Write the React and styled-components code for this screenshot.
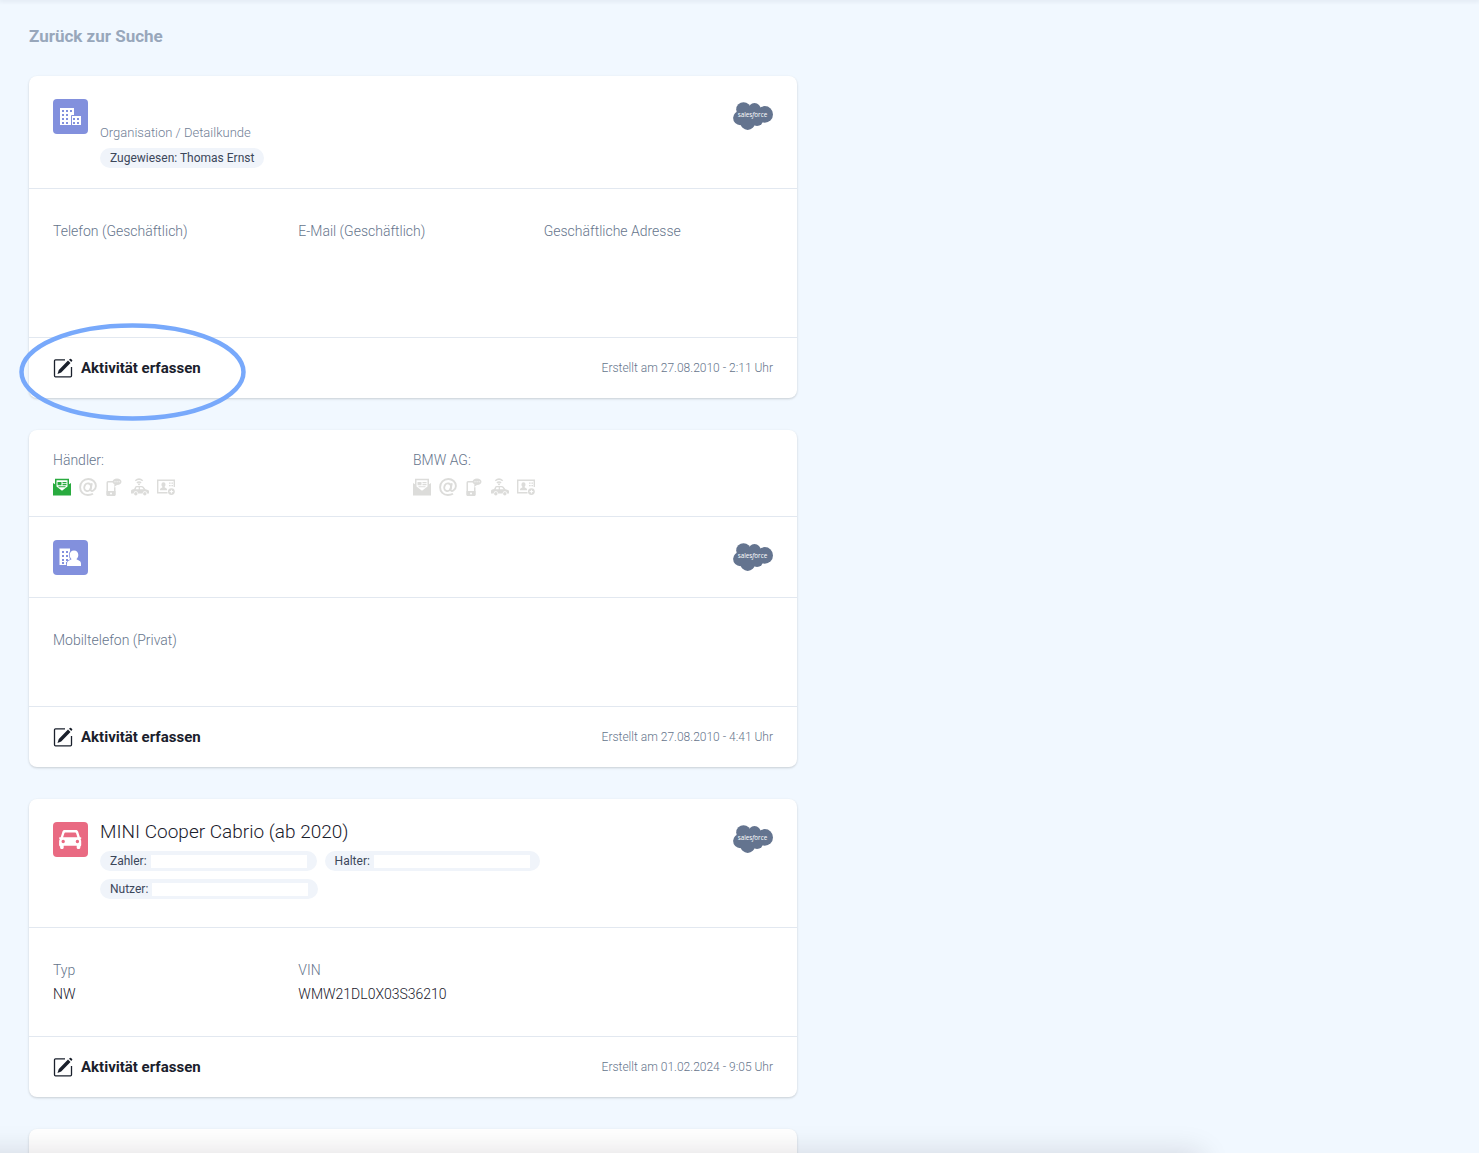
import React from 'react';
import styled, { createGlobalStyle } from 'styled-components';

const GlobalStyle = createGlobalStyle`
  * {
    box-sizing: border-box;
  }

  body {
    margin: 0;
    background-color: #f1f8ff;
    color: #1a202c;
    font-family: Roboto, "Noto Sans", sans-serif;
    font-size: 14px;
    font-weight: 300;
  }
`;

const Page = styled.main`
  height: 100vh;
  padding: 24px 29px 0;
  overflow: hidden;
`;

const TopEdge = styled.div`
  position: fixed;
  top: 0;
  left: 0;
  right: 0;
  height: 0;
  box-shadow: 0 0 4px 1px rgba(45, 55, 90, 0.14);
`;

const BottomEdge = styled.div`
  position: fixed;
  top: 100%;
  left: -40px;
  width: 84%;
  height: 60px;
  box-shadow: 0 0 30px 0 rgba(30, 10, 30, 0.14);
`;

const BackLink = styled.a`
  display: inline-block;
  line-height: 24px;
  font-size: 17px;
  font-weight: 700;
  color: #98a7bb;
  text-decoration: none;
`;

const CardList = styled.div`
  display: flex;
  flex-direction: column;
  gap: 32px;
  max-width: 768px;
  margin-top: 28px;
`;

const Card = styled.section`
  min-height: 80px;
  background-color: #fff;
  border-radius: 8px;
  box-shadow: 0 1px 3px rgba(0, 0, 0, 0.1), 0 1px 2px rgba(0, 0, 0, 0.08);
`;

const Header = styled.header`
  display: flex;
  gap: 12px;
  min-height: 80px;
  padding: 19px 24px 20px;
`;

const TypeIcon = styled.div`
  flex: none;
  width: 35px;
  height: 35px;
  margin-top: 4px;
  border-radius: 4px;
  background-color: ${props => props.$color};

  svg {
    display: block;
  }
`;

const HeaderText = styled.div`
  flex: 1;
  max-width: 480px;
`;

const Title = styled.h2`
  min-height: 28px;
  margin: 0;
  font-size: 19px;
  font-weight: 300;
  line-height: 28px;
`;

const Subtitle = styled.div`
  font-size: 13px;
  line-height: 20px;
  color: #718096;
`;

const Badges = styled.div`
  display: flex;
  flex-wrap: wrap;
  gap: 8px;
  margin-top: 5px;
  padding-bottom: ${props => props.$spaced ? '8px' : '0'};
`;

const Badge = styled.span`
  display: flex;
  align-items: center;
  height: 20px;
  padding: 0 10px;
  border-radius: 10px;
  background-color: #f0f4fa;
  font-size: 12px;
  font-weight: 400;
  color: #3c475a;
`;

const Blank = styled.span`
  width: 156px;
  height: 13px;
  margin-left: 4px;
  background-color: #fff;
`;

const LogoSlot = styled.div`
  flex: none;
  margin: 7px 0 0 auto;

  svg {
    display: block;
  }
`;

const Consents = styled.div`
  display: grid;
  grid-template-columns: 1fr 1fr;
  padding: 18px 24px 20px;
  border-bottom: 1px solid #e2e8f0;
`;

const ConsentIcons = styled.div`
  display: flex;
  gap: 8px;
  margin-top: 6px;
  color: #dcdcda;

  svg {
    display: block;
  }
`;

const Details = styled.dl`
  display: grid;
  grid-template-columns: repeat(3, 1fr);
  column-gap: 16px;
  margin: 0;
  padding: 30px 24px;
  border-top: 1px solid #e2e8f0;
  border-bottom: 1px solid #e2e8f0;
`;

const Label = styled.dt`
  line-height: 24px;
  font-size: 14px;
  color: #66758c;
`;

const Value = styled.dd`
  min-height: ${props => props.$tall ? '64px' : '24px'};
  margin: 0;
  font-size: 14px;
  line-height: 24px;
`;

const Footer = styled.footer`
  position: relative;
  display: flex;
  align-items: center;
  justify-content: space-between;
  height: 60px;
  padding: 0 24px;
`;

const ActionButton = styled.button`
  display: flex;
  align-items: center;
  gap: 8px;
  padding: 0;
  border: 0;
  background: none;
  color: #1a202c;
  font: inherit;
  font-size: 15px;
  font-weight: 700;
  cursor: pointer;
`;

const Created = styled.span`
  font-size: 12px;
  color: #66758c;
`;

const Marker = styled.svg`
  position: absolute;
  top: -15px;
  left: -10px;
  pointer-events: none;
`;

function SalesforceLogo(){
  return (
    <svg width="40" height="28" viewBox="0 0 40 28" role="img" aria-label="salesforce">
      <g fill="#64748f">
        <circle cx="10.500" cy="7.500" r="7.300" />
        <circle cx="21.500" cy="7.500" r="6.400" />
        <circle cx="31.700" cy="12.400" r="8.300" />
        <circle cx="7.300" cy="16" r="7.200" />
        <circle cx="14.700" cy="20.700" r="7.200" />
        <circle cx="24" cy="17.800" r="6.200" />
        <path d="M8 8h22v10H8z" />
      </g>
      <text x="4.700" y="15.200" fill="#fff" fontFamily="Open Sans, sans-serif" fontSize="6.300" fontWeight="500">
        sales<tspan fontStyle="italic">f</tspan>orce
      </text>
    </svg>
  );
}

function CompanyIcon(){
  return (
    <svg width="35" height="35" viewBox="0 0 35 35">
      <path d="M7 9h14v8h7v9h-21z" fill="#fff" />
      <path d="M18.500 26v-9.500h2.500" fill="none" stroke="#8290dd" />
      <g fill="#8290dd">
        {[11, 15, 19, 23].map(y => [9, 13, 17].map(x => (
          x === 17 && y > 11 ? null : <rect key={`${x}-${y}`} x={x} y={y} width="2" height="2" />
        )))}
        {[19, 23].map(y => [20, 24].map(x => <rect key={`${x}-${y}`} x={x} y={y} width="2" height="2" />))}
      </g>
    </svg>
  );
}

function ContactIcon(){
  return (
    <svg width="35" height="35" viewBox="0 0 35 35">
      <path d="M6.500 8.500h10.500v16.500h-10.500z" fill="#fff" />
      <g fill="#8290dd">
        {[11, 15, 19, 22].map(y => [9, 13].map(x => <rect key={`${x}-${y}`} x={x} y={y} width="2" height="2" />))}
      </g>
      <path
        d="M21 10.500c2.700 0 4.300 2 4.300 4.400 0 1.700-.7 3.200-1.800 4.200.2 1.200 4.500 1.200 4.500 4.600v2.300H14v-2.300c0-3.400 4.300-3.400 4.500-4.600-1.100-1-1.800-2.500-1.800-4.200 0-2.400 1.600-4.400 4.300-4.400z"
        fill="#fff"
        stroke="#8290dd"
        strokeWidth="1.600"
        paintOrder="stroke"
      />
    </svg>
  );
}

function CarIcon(){
  return (
    <svg width="35" height="35" viewBox="0 0 35 35">
      <path
        fill="#fff"
        fillRule="evenodd"
        d="M11.700 8h11.100c1.200 0 2 .6 2.400 1.700l1.700 5.500h.7c1 0 1 1.700 0 1.900 .4.800.6 1.500.6 2.400V23c0 .8-.3 1.300-.9 1.600v1.200c0 1.600-3.600 1.600-3.600 0v-2H10.700v2c0 1.600-3.600 1.600-3.600 0v-1.200c-.6-.3-1-.8-1-1.600v-3.500c0-.9.200-1.600.7-2.400-1-.2-1-1.900 0-1.900h.9l1.700-5.500C9.700 8.600 10.500 8 11.700 8zm.6 2.500c-.4 0-.7.200-.8.600l-1.400 4.100h14.300l-1.400-4.100c-.1-.4-.4-.6-.8-.6zM10.200 17.800a1.700 1.700 0 1 0 0 3.400 1.700 1.700 0 0 0 0-3.400zm14.200 0a1.700 1.700 0 1 0 0 3.400 1.700 1.700 0 0 0 0-3.400z"
      />
    </svg>
  );
}

function EditIcon(){
  return (
    <svg width="20" height="20" viewBox="0 0 20 20" aria-hidden="true">
      <path d="M12 1.800H2.500q-1 0-1 1v15q0 1 1 1h15q1 0 1-1V9" fill="none" stroke="#1a202c" strokeWidth="1.300" />
      <path d="M15 2.600l2.500 2.500-9.300 9.400-3.700 1.400 1.300-3.900zM16 1.700l.9-.8q.6-.5 1.200 0l1 1q.6.600 0 1.200l-.8.900z" fill="#1a202c" />
    </svg>
  );
}

function LetterIcon({color = 'currentColor'}){
  return (
    <svg width="18" height="18" viewBox="0 0 18 18" fill={color}>
      <path d="M2 .7h14v5.600l2-1.300v12.500H0V5l2 1.300zM3.500 2.200v6.300L9 12.700l5.500-4.200V2.200z" fillRule="evenodd" />
      <path d="M4.500 4h4v3.300h-4zM9.500 4h4v1.200h-4zM9.500 6.100h4v1.200h-4zM5.500 8.200h7v1h-7z" />
    </svg>
  );
}

function AtIcon(){
  return (
    <svg width="18" height="18" viewBox="0 0 18 18" fill="none" stroke="currentColor" strokeWidth="1.900">
      <ellipse cx="8.600" cy="9.200" rx="3.300" ry="3.900" transform="rotate(18 8.600 9.200)" />
      <path d="M12.800 5.200l-1.200 6c-.4 2 1.500 2.200 3 1 1.500-1 2.300-2.500 2.300-4.200C16.900 3.800 13.500 1 9.300 1 4.600 1 1.100 4.500 1.100 9.200s3.300 7.800 7.800 7.800c2 0 3.600-.4 5.100-1.300" />
    </svg>
  );
}

function PhoneIcon(){
  return (
    <svg width="18" height="18" viewBox="0 0 18 18" fill="currentColor">
      <path d="M3 3h5v1.500H3v9h6V9.300h1.500v7.200q0 1.500-1.500 1.500H3q-1.500 0-1.500-1.500v-12Q1.500 3 3 3z" />
      <path d="M1.500 13h9v3.500q0 1.500-1.500 1.500H3q-1.500 0-1.500-1.500z" />
      <circle cx="6" cy="15.600" r="1" fill="#fff" />
      <path d="M12 .5c2.700 0 4.500 1.300 4.500 3.300S14.700 7 12 7L9 9l.5-2.600C8.300 5.800 7.600 5 7.600 3.800 7.600 1.800 9.300.5 12 .5z" />
      <path d="M9.500 3.300h1v1h-1zM11.600 3.300h1v1h-1zM13.700 3.300h1v1h-1z" fill="#fff" />
    </svg>
  );
}

function ConnectedCarIcon(){
  return (
    <svg width="18" height="18" viewBox="0 0 18 18" fill="currentColor">
      <path d="M4.300 2.800Q8-.6 11.700 2.800M5.900 4.900q2.100-1.700 4.200 0" fill="none" stroke="currentColor" strokeWidth="1.500" />
      <circle cx="8" cy="6.300" r="1" />
      <path fillRule="evenodd" d="M5.500 8h5.300q1 0 1.700.8l2 2.400 2.500.7q1 .4 1 1.400v2.200h-2a2.200 2.200 0 0 0-4.400 0H7a2.200 2.200 0 0 0-4.400 0H0V13q0-1.200 1.200-1.500l1.900-.4 1-2.200Q4.500 8 5.500 8zm0 1.200l-.8 2h3v-2zm3.400 0v2h3.800l-1.500-1.700q-.3-.3-.8-.3z" />
      <circle cx="4.800" cy="15.800" r="1.700" />
      <circle cx="13.800" cy="15.800" r="1.700" />
    </svg>
  );
}

function IdCardIcon(){
  return (
    <svg width="18" height="18" viewBox="0 0 18 18" fill="currentColor">
      <path d="M17.300 9V2.200H.7v12.600h9.800" fill="none" stroke="currentColor" strokeWidth="1.400" />
      <path d="M6.500 4.300c2.500 0 2.500 3.500 1 4.600 0 .9 2.500.8 2.500 2.600v.8H3v-.8c0-1.800 2.500-1.700 2.500-2.600-1.500-1.100-1.500-4.600 1-4.600zM12 4.500h1.600v1.300H12zM14.400 4.500H16v1.300h-1.600zM12 7h1.600v1.300H12zM14.400 7H16v1.300h-1.600z" />
      <circle cx="14.400" cy="13.600" r="3.400" />
      <path d="M14.400 11.800v3.600M12.600 13.600h3.600" stroke="#fff" strokeWidth="1" />
    </svg>
  );
}

function ConsentGroup({label, letterColor}){
  return (
    <div>
      <Label as="div">{label}</Label>
      <ConsentIcons>
        <LetterIcon color={letterColor} />
        <AtIcon />
        <PhoneIcon />
        <ConnectedCarIcon />
        <IdCardIcon />
      </ConsentIcons>
    </div>
  );
}

function CardHeader({icon, color, children}){
  return (
    <Header>
      <TypeIcon $color={color}>{icon}</TypeIcon>
      <HeaderText>{children}</HeaderText>
      <LogoSlot><SalesforceLogo /></LogoSlot>
    </Header>
  );
}

function CardDetails({fields, tall}){
  return (
    <Details>
      {fields.map(field => (
        <div key={field.label}>
          <Label>{field.label}</Label>
          <Value $tall={tall}>{field.value}</Value>
        </div>
      ))}
    </Details>
  );
}

function CardFooter({created, marked}){
  return (
    <Footer>
      <ActionButton type="button"><EditIcon />Aktivität erfassen</ActionButton>
      <Created>Erstellt am {created} Uhr</Created>
      {marked ? (
        <Marker width="228" height="98" viewBox="0 0 228 98">
          <ellipse cx="113.500" cy="49" rx="111" ry="46.500" fill="none" stroke="#78a9fb" strokeWidth="4.500" />
        </Marker>
      ) : null}
    </Footer>
  );
}

function App(){
  return (
    <>
      <GlobalStyle />
      <TopEdge />
      <Page>
        <BackLink href="#suche">Zurück zur Suche</BackLink>
        <CardList>
          <Card>
            <CardHeader icon={<CompanyIcon />} color="#8290dd">
              <Title as="div" />
              <Subtitle>Organisation / Detailkunde</Subtitle>
              <Badges><Badge>Zugewiesen: Thomas Ernst</Badge></Badges>
            </CardHeader>
            <CardDetails
              tall
              fields={[{label: 'Telefon (Geschäftlich)'}, {label: 'E-Mail (Geschäftlich)'}, {label: 'Geschäftliche Adresse'}]}
            />
            <CardFooter created="27.08.2010 - 2:11" marked />
          </Card>
          <Card>
            <Consents>
              <ConsentGroup label="Händler:" letterColor="#29ab3f" />
              <ConsentGroup label="BMW AG:" />
            </Consents>
            <CardHeader icon={<ContactIcon />} color="#8290dd" />
            <CardDetails fields={[{label: 'Mobiltelefon (Privat)'}]} />
            <CardFooter created="27.08.2010 - 4:41" />
          </Card>
          <Card>
            <CardHeader icon={<CarIcon />} color="#e96a82">
              <Title>MINI Cooper Cabrio (ab 2020)</Title>
              <Badges $spaced>
                <Badge>Zahler:<Blank /></Badge>
                <Badge>Halter:<Blank /></Badge>
                <Badge>Nutzer:<Blank /></Badge>
              </Badges>
            </CardHeader>
            <CardDetails fields={[{label: 'Typ', value: 'NW'}, {label: 'VIN', value: 'WMW21DL0X03S36210'}]} />
            <CardFooter created="01.02.2024 - 9:05" />
          </Card>
          <Card />
        </CardList>
      </Page>
      <BottomEdge />
    </>
  );
}

export default App;
